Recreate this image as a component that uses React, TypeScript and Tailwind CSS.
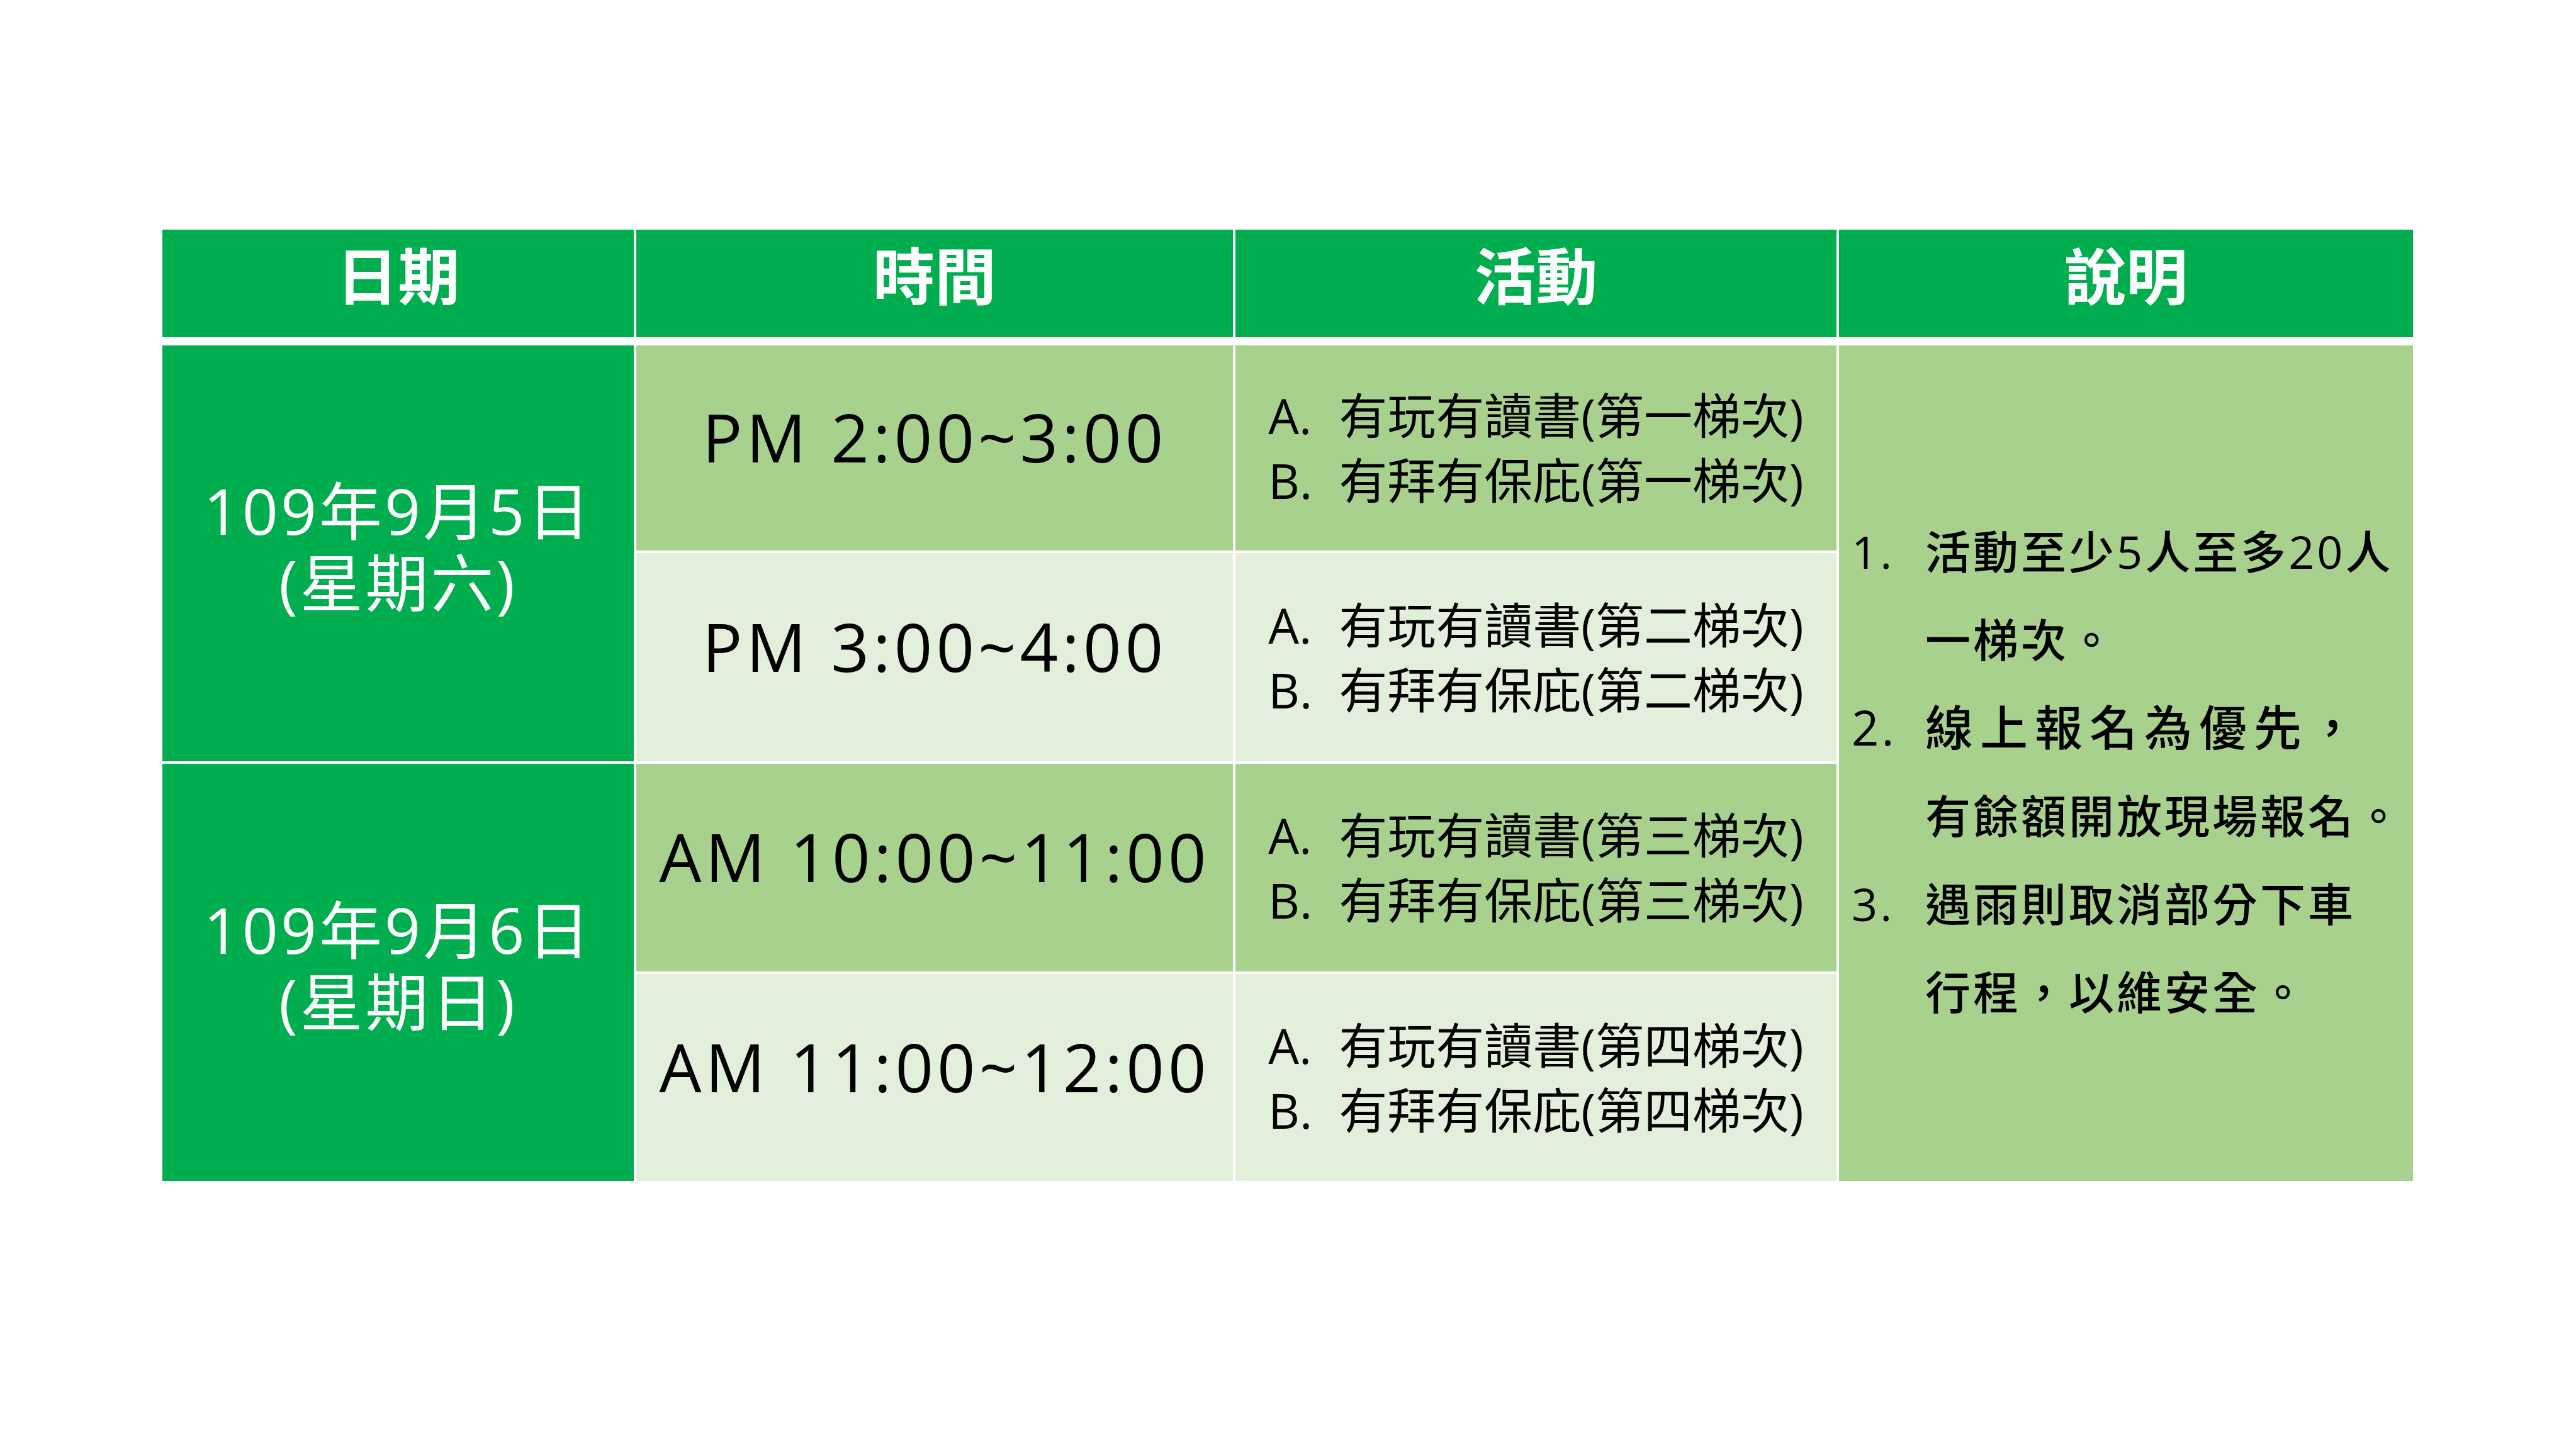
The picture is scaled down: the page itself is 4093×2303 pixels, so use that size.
const cjk = "font-['Noto_Sans_CJK_TC',sans-serif]";
const latin = "font-['Open_Sans','Noto_Sans_CJK_TC',sans-serif]";

interface Slot {
  time: string;
  batch: string;
  light: boolean;
}

const slots: Slot[] = [
  { time: 'PM 2:00~3:00', batch: '第一梯次', light: false },
  { time: 'PM 3:00~4:00', batch: '第二梯次', light: true },
  { time: 'AM 10:00~11:00', batch: '第三梯次', light: false },
  { time: 'AM 11:00~12:00', batch: '第四梯次', light: true },
];

// wide marks the line that is set looser in the slide
const notes: { num: string; text: string; wide?: boolean }[] = [
  { num: '1.', text: '活動至少5人至多20人' },
  { num: '', text: '一梯次。' },
  { num: '2.', text: '線上報名為優先，', wide: true },
  { num: '', text: '有餘額開放現場報名。' },
  { num: '3.', text: '遇雨則取消部分下車' },
  { num: '', text: '行程，以維安全。' },
];

const headers = ['日期', '時間', '活動', '說明'];

function DateCell({ date, day, row }: { date: string; day: string; row: string }) {
  return (
    <div className={`col-start-1 ${row} row-span-2 bg-[#00ad4f] flex items-center justify-center pb-[24px]`}>
      <div className={`${latin} text-white text-[100px] leading-[114px] tracking-[4px] text-center`}>
        <div>{date}</div>
        <div>{day}</div>
      </div>
    </div>
  );
}

export default function App() {
  return (
    <div className="w-[4093px] h-[2303px] bg-white pt-[365px] pl-[258px]">
      <div className="w-[3576px]">
        {/* Header row */}
        <div className="grid grid-cols-[749px_948px_955px_912px] gap-x-[4px] h-[171px]">
          {headers.map((h) => (
            <div key={h} className="bg-[#00ad4f] flex items-center justify-center pb-[36px]">
              <span className={`${cjk} text-white font-bold text-[98px] leading-none`}>{h}</span>
            </div>
          ))}
        </div>

        {/* Body */}
        <div className="mt-[13px] grid grid-cols-[749px_948px_955px_912px] grid-rows-[326px_331px_330px_329px] gap-[4px]">
          <DateCell date="109年9月5日" day="(星期六)" row="row-start-1" />
          <DateCell date="109年9月6日" day="(星期日)" row="row-start-3" />

          {slots.map((s, i) => {
            const bg = s.light ? 'bg-[#e2efda]' : 'bg-[#a9d18e]';
            const rows = ['row-start-1', 'row-start-2', 'row-start-3', 'row-start-4'];
            return [
              <div
                key={`t${i}`}
                className={`col-start-2 ${rows[i]} ${bg} flex items-center justify-center pb-[36px]`}
              >
                <span className={`${latin} text-black text-[106px] leading-none tracking-[6px]`}>{s.time}</span>
              </div>,
              <div key={`a${i}`} className={`col-start-3 ${rows[i]} ${bg} flex items-center justify-center`}>
                <div className={`${latin} text-black text-[77px] leading-[103px] whitespace-nowrap`}>
                  <div>
                    <span className="inline-block w-[112px]">A.</span>有玩有讀書({s.batch})
                  </div>
                  <div>
                    <span className="inline-block w-[112px]">B.</span>有拜有保庇({s.batch})
                  </div>
                </div>
              </div>,
            ];
          })}

          <div className="col-start-4 row-start-1 row-span-4 bg-[#a9d18e] flex items-center pl-[20px] pt-[26px]">
            <div className={`${latin} text-black font-medium text-[72px] leading-[140px] tracking-[4px]`}>
              {notes.map((n, i) => (
                <div key={i} className="flex whitespace-nowrap">
                  <span className={`w-[117px] shrink-0 ${n.wide ? 'text-[76px]' : ''}`}>{n.num}</span>
                  <span className={n.wide ? 'text-[76px] tracking-[11px]' : ''}>{n.text}</span>
                </div>
              ))}
            </div>
          </div>
        </div>
      </div>
    </div>
  );
}
